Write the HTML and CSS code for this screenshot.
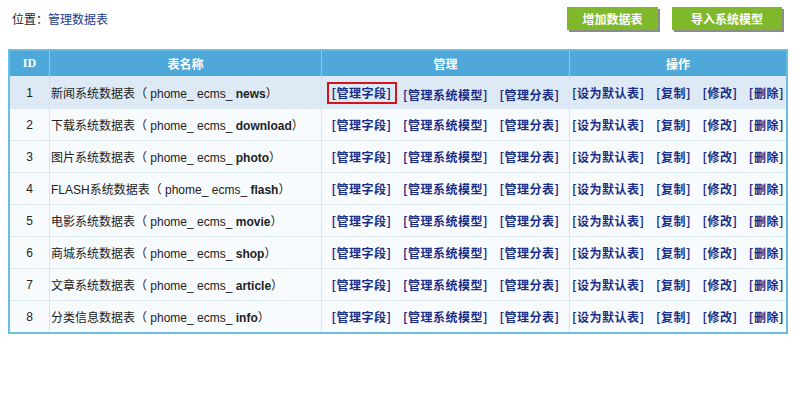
FILE: index.html
```html
<!DOCTYPE html>
<html lang="zh-CN">

<head>
    <meta charset="UTF-8">
    <title>管理数据表</title>
    <link rel="stylesheet" href="styles.css">
</head>

<body>
    <div class="page">
        <div class="topbar">
            <div class="crumb">位置：<a href="#">管理数据表</a></div>
            <div class="actions">
                <button class="btn">增加数据表</button>
                <button class="btn">导入系统模型</button>
            </div>
        </div>

        <table class="list">
            <thead>
                <tr>
                    <th class="col-id">ID</th>
                    <th class="col-name">表名称</th>
                    <th class="col-manage">管理</th>
                    <th>操作</th>
                </tr>
            </thead>
            <tbody>
                <tr class="hover">
                    <td class="col-id">1</td>
                    <td class="name">新闻系统数据表（ phome_ ecms_ <b>news</b>）</td>
                    <td class="links"><a href="#" class="picked">[管理字段]</a> <a href="#">[管理系统模型]</a> <a href="#">[管理分表]</a></td>
                    <td class="links"><a href="#">[设为默认表]</a> <a href="#">[复制]</a> <a href="#">[修改]</a> <a href="#">[删除]</a></td>
                </tr>
                <tr>
                    <td class="col-id">2</td>
                    <td class="name">下载系统数据表（ phome_ ecms_ <b>download</b>）</td>
                    <td class="links"><a href="#">[管理字段]</a> <a href="#">[管理系统模型]</a> <a href="#">[管理分表]</a></td>
                    <td class="links"><a href="#">[设为默认表]</a> <a href="#">[复制]</a> <a href="#">[修改]</a> <a href="#">[删除]</a></td>
                </tr>
                <tr>
                    <td class="col-id">3</td>
                    <td class="name">图片系统数据表（ phome_ ecms_ <b>photo</b>）</td>
                    <td class="links"><a href="#">[管理字段]</a> <a href="#">[管理系统模型]</a> <a href="#">[管理分表]</a></td>
                    <td class="links"><a href="#">[设为默认表]</a> <a href="#">[复制]</a> <a href="#">[修改]</a> <a href="#">[删除]</a></td>
                </tr>
                <tr>
                    <td class="col-id">4</td>
                    <td class="name">FLASH系统数据表（ phome_ ecms_ <b>flash</b>）</td>
                    <td class="links"><a href="#">[管理字段]</a> <a href="#">[管理系统模型]</a> <a href="#">[管理分表]</a></td>
                    <td class="links"><a href="#">[设为默认表]</a> <a href="#">[复制]</a> <a href="#">[修改]</a> <a href="#">[删除]</a></td>
                </tr>
                <tr>
                    <td class="col-id">5</td>
                    <td class="name">电影系统数据表（ phome_ ecms_ <b>movie</b>）</td>
                    <td class="links"><a href="#">[管理字段]</a> <a href="#">[管理系统模型]</a> <a href="#">[管理分表]</a></td>
                    <td class="links"><a href="#">[设为默认表]</a> <a href="#">[复制]</a> <a href="#">[修改]</a> <a href="#">[删除]</a></td>
                </tr>
                <tr>
                    <td class="col-id">6</td>
                    <td class="name">商城系统数据表（ phome_ ecms_ <b>shop</b>）</td>
                    <td class="links"><a href="#">[管理字段]</a> <a href="#">[管理系统模型]</a> <a href="#">[管理分表]</a></td>
                    <td class="links"><a href="#">[设为默认表]</a> <a href="#">[复制]</a> <a href="#">[修改]</a> <a href="#">[删除]</a></td>
                </tr>
                <tr>
                    <td class="col-id">7</td>
                    <td class="name">文章系统数据表（ phome_ ecms_ <b>article</b>）</td>
                    <td class="links"><a href="#">[管理字段]</a> <a href="#">[管理系统模型]</a> <a href="#">[管理分表]</a></td>
                    <td class="links"><a href="#">[设为默认表]</a> <a href="#">[复制]</a> <a href="#">[修改]</a> <a href="#">[删除]</a></td>
                </tr>
                <tr>
                    <td class="col-id">8</td>
                    <td class="name">分类信息数据表（ phome_ ecms_ <b>info</b>）</td>
                    <td class="links"><a href="#">[管理字段]</a> <a href="#">[管理系统模型]</a> <a href="#">[管理分表]</a></td>
                    <td class="links"><a href="#">[设为默认表]</a> <a href="#">[复制]</a> <a href="#">[修改]</a> <a href="#">[删除]</a></td>
                </tr>
            </tbody>
        </table>
    </div>
</body>

</html>
```

FILE: styles.css
```css
body {
    margin: 0;
    padding: 0;
    background: #fff;
    font-family: "Liberation Sans", "Noto Sans CJK SC", sans-serif;
    font-size: 12px;
    color: #222;
}

.page {
    padding: 0 12px 0 8px;
}

.topbar {
    display: flex;
    justify-content: space-between;
    align-items: center;
    height: 36px;
    padding-left: 4px;
    margin-bottom: 13px;
}

.crumb a {
    color: #1c3a8e;
    text-decoration: none;
}

.actions {
    display: flex;
    gap: 14px;
    padding-right: 6px;
}

.btn {
    height: 23px;
    padding: 0 13px;
    border: none;
    background-color: #7fb82a;
    color: #fff;
    font-family: "Noto Sans CJK SC", sans-serif;
    font-size: 12px;
    font-weight: bold;
    box-shadow: 2px 2px 0 #8c8c8c;
    cursor: pointer;
}

.btn:first-child {
    width: 91px;
}

.btn:last-child {
    width: 110px;
}

.list {
    width: 780px;
    border-collapse: collapse;
    border: 2px solid #6cbde2;
}

.list th {
    height: 25px;
    padding: 0;
    background-color: #4ea9da;
    color: #fff;
    font-family: "Noto Sans CJK SC", sans-serif;
    font-weight: bold;
    border-left: 1px solid #8ccbeb;
}

.list th.col-id {
    font-family: "Liberation Serif", serif;
}

.list td {
    height: 31px;
    padding: 0;
    background-color: #f8fbfd;
    border-top: 1px solid #dbe9f2;
    border-left: 1px solid #d3e6f1;
}

.list tr.hover td {
    background-color: #dde9f4;
}

.col-id {
    width: 39px;
    text-align: center;
}

.col-name {
    width: 271px;
}

.col-manage {
    width: 247px;
}

.list td.name {
    padding-left: 1px;
}

.links {
    text-align: center;
    word-spacing: 8px;
}

.links a {
    font-family: "Noto Sans CJK SC", sans-serif;
    font-weight: bold;
    letter-spacing: 0.5px;
    color: #1a2d86;
    text-decoration: none;
    word-spacing: 0;
}

/* red frame around the current link, kept out of the flow */
.links a.picked {
    display: inline-block;
    vertical-align: 2px;
    line-height: 14px;
    padding: 2px 3px;
    margin: 0 -5px;
    border: 2px solid #d4141a;
}
```
